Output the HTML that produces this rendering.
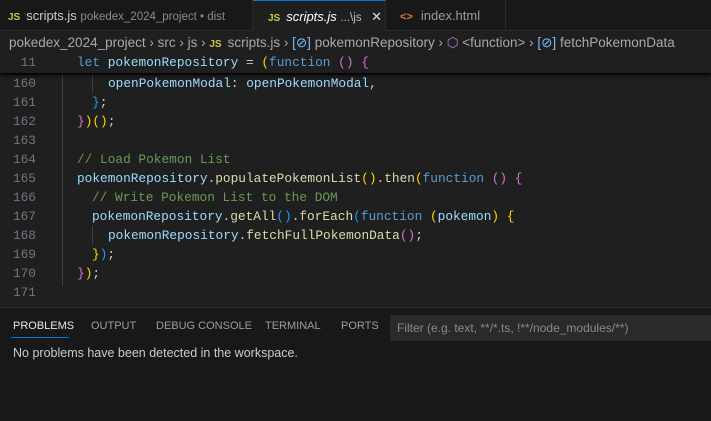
<!DOCTYPE html>
<html><head><meta charset="utf-8"><style>
*{margin:0;padding:0;box-sizing:border-box}
body{width:711px;height:421px;background:#1f1f1f;overflow:hidden;font-family:"Liberation Sans",sans-serif;color:#ccc;position:relative}
.tabs{position:absolute;left:0;top:0;width:711px;height:31px;background:#181818;border-bottom:1px solid #2b2b2b}
.tab{position:absolute;top:0;height:31px;font-size:13px;line-height:31px;white-space:nowrap;color:#9d9d9d;border-right:1px solid #2b2b2b}
.js{color:#cbcb41;font-weight:bold;font-size:10px;margin-right:6px}
.bc{position:absolute;top:32px;left:9px;height:22px;line-height:22px;font-size:13.5px;color:#a9a9a9;white-space:nowrap}
.code{position:absolute;left:0;top:2px;font-family:"Liberation Mono",monospace;font-size:12.8px;white-space:pre}
.ln{position:absolute;left:0;width:36px;text-align:right;color:#6e7681}
.tx{position:absolute;left:77px}
.k{color:#569cd6}.v{color:#9cdcfe}.f{color:#dcdcaa}.c{color:#6a9955}.y{color:#ffd700}.p{color:#da70d6}.b{color:#179fff}.w{color:#ccc}
.guide{position:absolute;width:1px;background:#404040}
.panel{position:absolute;left:0;top:307px;width:711px;height:114px;background:#181818;border-top:1px solid #2b2b2b}
.pt{position:absolute;top:12px;font-size:11px;color:#9d9d9d}
</style></head><body>
<div class="tabs">
<div class="tab" style="left:0;width:253px;padding-left:8px"><span class="js">JS</span><span style="color:#ccc">scripts.js</span> <span style="font-size:11.5px;color:#8b8b8b">pokedex_2024_project • dist</span></div>
<div class="tab" style="left:253px;width:133px;background:#1f1f1f;padding-left:15px;border-top:1px solid #0078d4"><span class="js">JS</span><i style="color:#fff">scripts.js</i> <span style="font-size:11.5px;color:#bbb">...\js</span> <span style="color:#ddd;margin-left:6px">✕</span></div>
<div class="tab" style="left:386px;width:120px;padding-left:14px"><span style="color:#e37933;font-weight:bold;font-size:11px;margin-right:8px">&lt;&gt;</span>index.html</div>
</div>
<div class="bc">pokedex_2024_project › src › js › <span class="js">JS</span>scripts.js › <span style="color:#75beff">[⊘]</span> pokemonRepository › <span style="color:#b180d7">⬡</span> &lt;function&gt; › <span style="color:#75beff">[⊘]</span> fetchPokemonData</div>
<div class="code">
<div style="position:absolute;top:51px;left:0;width:711px;height:20px;background:#1f1f1f;box-shadow:0 2px 3px #000;z-index:2">
<span class="ln" style="top:2px">11</span><span class="tx" style="top:2px"><span class="k">let</span> <span class="v">pokemonRepository</span> <span class="w">=</span> <span class="y">(</span><span class="k">function</span> <span class="p">()</span> <span class="p">{</span></span></div>
<div class="guide" style="left:62px;top:71px;height:213px"></div>
<div class="guide" style="left:92px;top:71px;height:20px"></div>
<div class="guide" style="left:92px;top:224px;height:19px"></div>
<span class="ln" style="top:74px">160</span><span class="tx" style="top:74px;left:108px"><span class="v">openPokemonModal</span><span class="w">: </span><span class="v">openPokemonModal</span><span class="w">,</span></span>
<span class="ln" style="top:93px">161</span><span class="tx" style="top:93px;left:92px"><span class="b">}</span><span class="w">;</span></span>
<span class="ln" style="top:112px">162</span><span class="tx" style="top:112px"><span class="p">}</span><span class="y">)()</span><span class="w">;</span></span>
<span class="ln" style="top:131px">163</span>
<span class="ln" style="top:150px">164</span><span class="tx c" style="top:150px">// Load Pokemon List</span>
<span class="ln" style="top:169px">165</span><span class="tx" style="top:169px"><span class="v">pokemonRepository</span><span class="w">.</span><span class="f">populatePokemonList</span><span class="y">()</span><span class="w">.</span><span class="f">then</span><span class="y">(</span><span class="k">function</span> <span class="p">()</span> <span class="p">{</span></span>
<span class="ln" style="top:188px">166</span><span class="tx c" style="top:188px;left:92px">// Write Pokemon List to the DOM</span>
<span class="ln" style="top:207px">167</span><span class="tx" style="top:207px;left:92px"><span class="v">pokemonRepository</span><span class="w">.</span><span class="f">getAll</span><span class="b">()</span><span class="w">.</span><span class="f">forEach</span><span class="b">(</span><span class="k">function</span> <span class="y">(</span><span class="v">pokemon</span><span class="y">)</span> <span class="y">{</span></span>
<span class="ln" style="top:226px">168</span><span class="tx" style="top:226px;left:108px"><span class="v">pokemonRepository</span><span class="w">.</span><span class="f">fetchFullPokemonData</span><span class="p">()</span><span class="w">;</span></span>
<span class="ln" style="top:245px">169</span><span class="tx" style="top:245px;left:92px"><span class="y">}</span><span class="b">)</span><span class="w">;</span></span>
<span class="ln" style="top:264px">170</span><span class="tx" style="top:264px"><span class="p">}</span><span class="y">)</span><span class="w">;</span></span>
<span class="ln" style="top:283px">171</span>
</div>
<div class="panel">
<span class="pt" style="left:13px;color:#e7e7e7">PROBLEMS</span>
<div style="position:absolute;left:11px;top:29px;width:58px;height:1px;background:#0078d4"></div>
<span class="pt" style="left:91px">OUTPUT</span>
<span class="pt" style="left:156px">DEBUG CONSOLE</span>
<span class="pt" style="left:265px">TERMINAL</span>
<span class="pt" style="left:341px">PORTS</span>
<div style="position:absolute;left:390px;top:7px;width:321px;height:26px;background:#2a2a2a;font-size:12px;line-height:26px;padding-left:7px;color:#8a8a8a">Filter (e.g. text, **/*.ts, !**/node_modules/**)</div>
<div style="position:absolute;left:13px;top:38px;font-size:12.5px;color:#ccc">No problems have been detected in the workspace.</div>
</div>
</body></html>
